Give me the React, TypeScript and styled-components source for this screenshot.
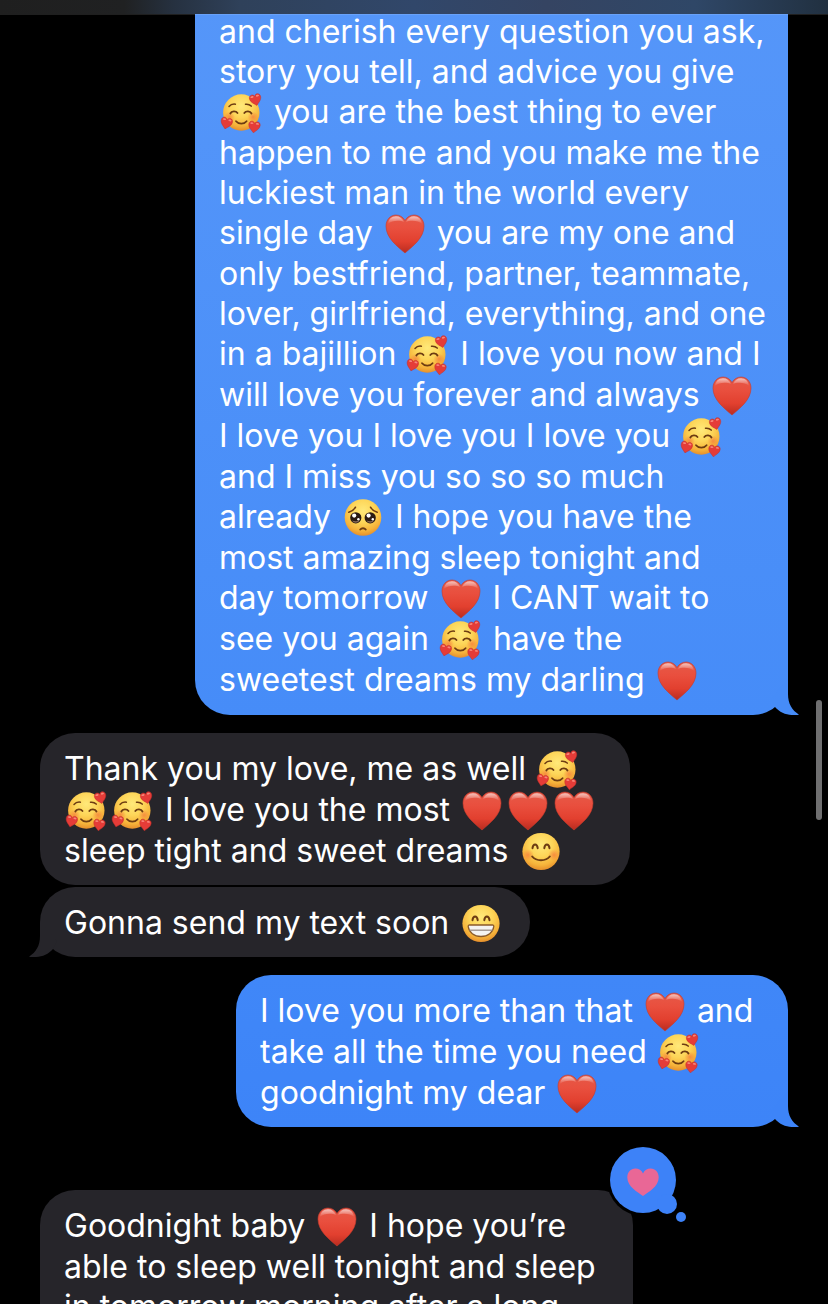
import React from 'react';
import styled, { createGlobalStyle, css } from 'styled-components';

const GlobalStyle = createGlobalStyle`
  *, *::before, *::after { box-sizing: border-box; }
  body {
    margin: 0;
    background: #000;
    color: #fff;
    font-family: Inter, 'Liberation Sans', sans-serif;
  }
`;

const Screen = styled.main`
  height: 100vh;
  overflow: hidden;
  background: #000;
`;

const HeaderEdge = styled.header`
  position: fixed;
  inset: 0 0 auto 0;
  z-index: 2;
  height: 14px;
  background: linear-gradient(90deg, #1f1f1f 0%, #202122 15%, #263140 21%, #2f415a 29%, #31476a 50%, #354462 66%, #2f4767 84%, #213040 100%);
  box-shadow: 0 1px 0 rgba(255, 255, 255, 0.12);
`;

const ScrollThumb = styled.div`
  position: fixed;
  top: 700px;
  right: 6px;
  z-index: 2;
  width: 6px;
  height: 120px;
  border-radius: 3px;
  background: #6f6f70;
`;

const Thread = styled.section`
  display: flex;
  flex-direction: column;
  padding: 0 40px;
`;

const Group = styled.div<{ $sent?: boolean; $spaced?: boolean }>`
  display: flex;
  flex-direction: column;
  align-items: ${p => (p.$sent ? 'flex-end' : 'flex-start')};
  gap: 2px;
  margin-bottom: ${p => (p.$spaced ? 63 : 18)}px;
`;

const tones = {
  blueTop: css`background: linear-gradient(#5596f9, #468cf8);`,
  blue: css`background: linear-gradient(#4087f8, #3d84f8);`,
  gray: css`background: #26252a;`,
};

const Bubble = styled.article<{ $tone: keyof typeof tones; $width: number; $continued?: boolean }>`
  position: relative;
  width: ${p => p.$width}px;
  max-width: 100%;
  padding: ${p => (p.$continued ? 12 : 16)}px 24px ${p => (p.$continued ? 14 : 13)}px;
  border-radius: ${p => (p.$continued ? '0 0 35px 35px' : '35px')};
  ${p => tones[p.$tone]}
`;

const Line = styled.div`
  font-size: 32px;
  line-height: 40px;
  white-space: nowrap;
`;

const EmojiBox = styled.svg`
  display: inline-block;
  width: 46px;
  height: 41px;
  vertical-align: top;
`;

const TailShape = styled.svg<{ $sent?: boolean }>`
  position: absolute;
  bottom: 0;
  width: 36px;
  height: 36px;
  ${p => (p.$sent ? 'right: -11px;' : 'left: -11px; transform: scaleX(-1);')}
`;

const ReactionShape = styled.svg`
  position: absolute;
  top: -46px;
  right: -56px;
  width: 82px;
  height: 82px;
`;

const Defs = styled.svg`
  position: absolute;
  width: 0;
  height: 0;
`;

function Gradients() {
  return (
    <Defs aria-hidden="true">
      <defs>
        <radialGradient id="face" cx="0.5" cy="0.32" r="0.7">
          <stop offset="0" stopColor="#ffe97a" />
          <stop offset="0.45" stopColor="#fdd558" />
          <stop offset="0.78" stopColor="#f6b33a" />
          <stop offset="1" stopColor="#e48a2a" />
        </radialGradient>
        <radialGradient id="blush">
          <stop offset="0" stopColor="#f5713a" stopOpacity="0.65" />
          <stop offset="1" stopColor="#f5713a" stopOpacity="0" />
        </radialGradient>
        <linearGradient id="heart" x1="0" y1="0" x2="0" y2="1">
          <stop offset="0" stopColor="#e65a48" />
          <stop offset="0.35" stopColor="#e94f3e" />
          <stop offset="0.7" stopColor="#e2402f" />
          <stop offset="1" stopColor="#b92c20" />
        </linearGradient>
        <linearGradient id="shine" x1="0" y1="0" x2="0" y2="1">
          <stop offset="0" stopColor="#fff" stopOpacity="0.65" />
          <stop offset="1" stopColor="#fff" stopOpacity="0" />
        </linearGradient>
      </defs>
    </Defs>
  );
}

const Heart = () => (
  <EmojiBox viewBox="0 0 46 41" role="img" aria-label="red heart">
    <path d="M23 40C15.500 33.500 4 25 4 13.200 4 6.500 8.600 2 14 2c4 0 7.200 2.200 9 5.600C24.800 4.200 28 2 32 2c5.400 0 10 4.500 10 11.200C42 25 30.500 33.500 23 40z" fill="url(#heart)" stroke="#c53a2c" strokeWidth="0.6" />
    <path d="M6 11C6.500 6 9.500 3.200 14 3.200c3.600 0 6.500 2 8 5.600C19 7.500 10 6.500 6 11z" fill="url(#shine)" />
    <path d="M40 11C39.500 6 36.500 3.200 32 3.200c-3.600 0-6.500 2-8 5.600C27 7.500 36 6.500 40 11z" fill="url(#shine)" />
  </EmojiBox>
);

const MiniHeart = ({ x, y, tilt }: { x: number; y: number; tilt: number }) => (
  <g transform={`translate(${x} ${y}) rotate(${tilt})`}>
    <path d="M0 6C-2.500 3.400-5.700 1.500-5.700-2c0-2 1.300-3.300 2.900-3.300 1.300 0 2.300.7 2.800 1.900.5-1.200 1.500-1.900 2.800-1.900 1.600 0 2.900 1.300 2.900 3.300C5.700 1.500 2.500 3.400 0 6z" fill="#e53c38" stroke="#c62f2a" strokeWidth="0.5" />
    <ellipse cx="-2.800" cy="-3.300" rx="1.600" ry="0.900" fill="#f68678" />
    <ellipse cx="2.800" cy="-3.300" rx="1.600" ry="0.900" fill="#f68678" />
  </g>
);

const ink = { fill: 'none', stroke: '#6d3c12', strokeLinecap: 'round' as const };

const Adoring = () => (
  <EmojiBox viewBox="0 0 46 41" role="img" aria-label="smiling face with hearts">
    <circle cx="22.300" cy="20.500" r="18.200" fill="url(#face)" />
    <circle cx="10.500" cy="25" r="5.500" fill="url(#blush)" />
    <circle cx="34" cy="25" r="5.500" fill="url(#blush)" />
    <g {...ink} strokeWidth="1.500">
      <path d="M10 14.500c1.600-1.900 3.800-2.700 6.400-2.300M26.500 12.200c2.300-.3 4.200.3 5.700 1.900" />
    </g>
    <g {...ink} strokeWidth="1.800">
      <path d="M11.300 21.500c1.200-2.600 5.600-2.800 7.200-.4M25.300 21.100c1.600-2.400 6-2.200 7.200.4M17 29.200c2.700 3.300 8 3.300 10.600 0" />
    </g>
    <MiniHeart x={36.500} y={7.600} tilt={-14} />
    <MiniHeart x={7.400} y={31} tilt={14} />
    <MiniHeart x={35.200} y={34.800} tilt={8} />
  </EmojiBox>
);

const Pleading = () => (
  <EmojiBox viewBox="0 0 46 41" role="img" aria-label="pleading face">
    <circle cx="23" cy="20.500" r="18.300" fill="url(#face)" />
    <g {...ink} strokeWidth="1.500">
      <path d="M8.800 15.200c3-.8 5.300-2.400 6.700-5M30.500 10.200c1.400 2.600 3.700 4.200 6.700 5" />
      <path d="M20.300 32.500c1.400-1.800 4-1.800 5.400 0" strokeWidth="2" />
    </g>
    <circle cx="15.800" cy="20.800" r="5.600" fill="#291a13" />
    <circle cx="30.200" cy="20.800" r="5.600" fill="#291a13" />
    <path d="M12 23.400c2 3 5.500 3 7.500 0-2 1-5.500 1-7.500 0zM26.500 23.400c2 3 5.500 3 7.500 0-2 1-5.500 1-7.500 0z" fill="#8a6a58" />
    <g fill="#fff">
      <circle cx="14.200" cy="18.600" r="2.100" />
      <circle cx="28.600" cy="18.600" r="2.100" />
      <circle cx="18.400" cy="22.200" r="1.200" />
      <circle cx="32.800" cy="22.200" r="1.200" />
    </g>
  </EmojiBox>
);

const Smiling = () => (
  <EmojiBox viewBox="0 0 46 41" role="img" aria-label="smiling face with smiling eyes">
    <circle cx="23" cy="20.500" r="18.600" fill="url(#face)" />
    <circle cx="10" cy="24" r="6" fill="url(#blush)" />
    <circle cx="36" cy="24" r="6" fill="url(#blush)" />
    <g {...ink} strokeWidth="2">
      <path d="M14.500 17.200c.6-5 4.600-5 5.200 0M26.300 17.200c.6-5 4.600-5 5.200 0" />
      <path d="M14.200 25.500c4 5 13.600 5 17.600 0" />
    </g>
  </EmojiBox>
);

const Beaming = () => (
  <EmojiBox viewBox="0 0 46 41" role="img" aria-label="beaming face">
    <circle cx="23" cy="20.500" r="18.600" fill="url(#face)" />
    <g {...ink} strokeWidth="2">
      <path d="M14.500 17.200c.6-5 4.600-5 5.200 0M26.300 17.200c.6-5 4.600-5 5.200 0" />
    </g>
    <path d="M11.500 22h23c.8 0 1.400.6 1.300 1.500C35 29.500 30 33.500 23 33.500s-12-4-12.800-10c-.1-.9.500-1.500 1.300-1.500z" fill="#f5f3f1" stroke="#8b5a2a" strokeWidth="1.300" />
    <path d="M11.500 27.200h23" stroke="#9c8f87" strokeWidth="1.300" />
  </EmojiBox>
);

const Tail = ({ sent, color }: { sent?: boolean; color: string }) => (
  <TailShape $sent={sent} viewBox="0 0 36 36" aria-hidden="true">
    <path d="M25 0V15C25 25 29 31 36 35.700 27 37 18 35 12 28L8 20z" fill={color} />
  </TailShape>
);

const LoveReaction = () => (
  <ReactionShape viewBox="0 0 82 82" role="img" aria-label="Loved">
    <circle cx="36" cy="36" r="36" fill="#000" />
    <g fill="#3d82f8">
      <circle cx="36" cy="36" r="33" />
      <circle cx="60" cy="60" r="10" />
      <circle cx="74" cy="73" r="5" />
    </g>
    <path d="M36 52C31 48 20.300 43 20.300 33.500c0-5.200 3.500-8.900 8-8.900 3.500 0 6.300 1.900 7.700 4.900 1.400-3 4.200-4.900 7.700-4.900 4.500 0 8 3.700 8 8.900C51.700 43 41 48 36 52z" fill="#e96796" />
  </ReactionShape>
);

export default function App() {
  return (
    <Screen>
      <GlobalStyle />
      <Gradients />
      <HeaderEdge />
      <ScrollThumb />
      <Thread aria-label="Conversation">
        <Group $sent>
          <Bubble $tone="blueTop" $width={593} $continued>
            <Line>and cherish every question you ask,</Line>
            <Line>story you tell, and advice you give</Line>
            <Line><Adoring /> you are the best thing to ever</Line>
            <Line>happen to me and you make me the</Line>
            <Line>luckiest man in the world every</Line>
            <Line>single day <Heart /> you are my one and</Line>
            <Line>only bestfriend, partner, teammate,</Line>
            <Line>lover, girlfriend, everything, and one</Line>
            <Line>in a bajillion <Adoring /> I love you now and I</Line>
            <Line>will love you forever and always <Heart /></Line>
            <Line>I love you I love you I love you <Adoring /></Line>
            <Line>and I miss you so so so much</Line>
            <Line>already <Pleading /> I hope you have the</Line>
            <Line>most amazing sleep tonight and</Line>
            <Line>day tomorrow <Heart /> I CANT wait to</Line>
            <Line>see you again <Adoring /> have the</Line>
            <Line>sweetest dreams my darling <Heart /></Line>
            <Tail sent color="#468cf8" />
          </Bubble>
        </Group>
        <Group>
          <Bubble $tone="gray" $width={590}>
            <Line>Thank you my love, me as well <Adoring /></Line>
            <Line><Adoring /><Adoring /> I love you the most <Heart /><Heart /><Heart /></Line>
            <Line>sleep tight and sweet dreams <Smiling /></Line>
          </Bubble>
          <Bubble $tone="gray" $width={490}>
            <Line>Gonna send my text soon <Beaming /></Line>
            <Tail color="#26252a" />
          </Bubble>
        </Group>
        <Group $sent $spaced>
          <Bubble $tone="blue" $width={552}>
            <Line>I love you more than that <Heart /> and</Line>
            <Line>take all the time you need <Adoring /></Line>
            <Line>goodnight my dear <Heart /></Line>
            <Tail sent color="#3d84f8" />
          </Bubble>
        </Group>
        <Group>
          <Bubble $tone="gray" $width={593}>
            <Line>Goodnight baby <Heart /> I hope you’re</Line>
            <Line>able to sleep well tonight and sleep</Line>
            <Line>in tomorrow morning after a long</Line>
            <LoveReaction />
          </Bubble>
        </Group>
      </Thread>
    </Screen>
  );
}
